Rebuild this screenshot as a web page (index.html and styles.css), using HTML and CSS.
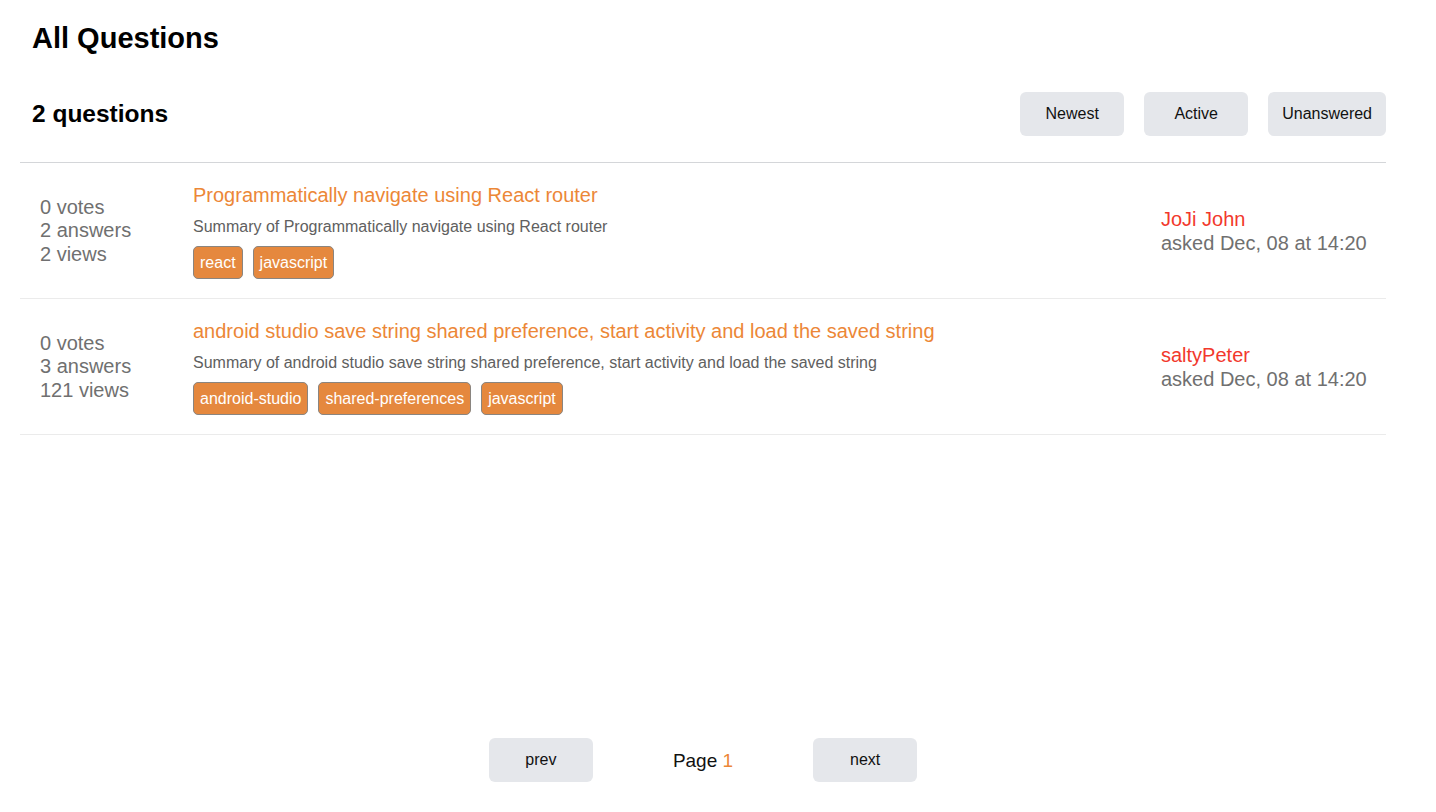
FILE: index.html
```html
<!DOCTYPE html>
<html lang="en">
<head>
<meta charset="utf-8">
<title>All Questions</title>
<link rel="stylesheet" href="styles.css">
</head>
<body>
<div class="page">
  <main class="main">
    <h1 class="page-title">All Questions</h1>
    <div class="toolbar">
      <h2 class="count">2 questions</h2>
      <div class="filters">
        <button class="btn">Newest</button>
        <button class="btn">Active</button>
        <button class="btn btn-wide">Unanswered</button>
      </div>
    </div>
    <ul class="questions">
      <li class="question">
        <div class="stats">
          <div>0 votes</div>
          <div>2 answers</div>
          <div>2 views</div>
        </div>
        <div class="body">
          <a class="q-title" href="#">Programmatically navigate using React router</a>
          <p class="summary">Summary of Programmatically navigate using React router</p>
          <div class="tags">
            <span class="tag">react</span>
            <span class="tag">javascript</span>
          </div>
        </div>
        <div class="meta">
          <div class="author">JoJi John</div>
          <div class="date">asked Dec, 08 at 14:20</div>
        </div>
      </li>
      <li class="question">
        <div class="stats">
          <div>0 votes</div>
          <div>3 answers</div>
          <div>121 views</div>
        </div>
        <div class="body">
          <a class="q-title" href="#">android studio save string shared preference, start activity and load the saved string</a>
          <p class="summary">Summary of android studio save string shared preference, start activity and load the saved string</p>
          <div class="tags">
            <span class="tag">android-studio</span>
            <span class="tag">shared-preferences</span>
            <span class="tag">javascript</span>
          </div>
        </div>
        <div class="meta">
          <div class="author">saltyPeter</div>
          <div class="date">asked Dec, 08 at 14:20</div>
        </div>
      </li>
    </ul>
  </main>
  <nav class="pager">
    <button class="btn">prev</button>
    <span class="page-label">Page <span class="page-num">1</span></span>
    <button class="btn">next</button>
  </nav>
</div>
</body>
</html>
```

FILE: styles.css
```css
* { box-sizing: border-box; }

html, body {
  margin: 0;
  padding: 0;
  background: #ffffff;
}

body {
  font-family: "Liberation Sans", Arial, Helvetica, sans-serif;
  color: #000;
}

.page {
  width: 1366px;
  margin-left: 20px;
  height: 812px;
  display: flex;
  flex-direction: column;
}

.main {
  display: flex;
  flex-direction: column;
}

.page-title {
  margin: 0;
  padding: 21px 0 0 12px;
  font-size: 29px;
  font-weight: bold;
  line-height: 34px;
}

.toolbar {
  display: flex;
  align-items: center;
  justify-content: space-between;
  padding: 37px 0 26px 12px;
  border-bottom: 1px solid #d4d6d9;
}

.count {
  margin: 0;
  font-size: 24.5px;
  font-weight: bold;
  line-height: 28px;
}

.filters {
  display: flex;
  gap: 20px;
}

.btn {
  font-family: "Liberation Sans", Arial, Helvetica, sans-serif;
  font-size: 16px;
  color: #111;
  background: #e5e7eb;
  border: none;
  border-radius: 6px;
  height: 44px;
  min-width: 104px;
  padding: 0 14px;
  cursor: pointer;
}

.questions {
  list-style: none;
  margin: 0;
  padding: 0;
}

.question {
  display: flex;
  align-items: center;
  padding: 20px 0 19px 20px;
  border-bottom: 1px solid #ebebeb;
}

.stats {
  width: 153px;
  flex-shrink: 0;
  font-size: 20px;
  line-height: 23.5px;
  color: #707070;
}

.body {
  flex: 1;
  display: flex;
  flex-direction: column;
  align-items: flex-start;
}

.q-title {
  font-size: 20px;
  line-height: 24px;
  color: #ec8737;
  text-decoration: none;
}

.summary {
  margin: 9px 0 0;
  font-size: 16px;
  line-height: 22px;
  color: #606060;
}

.tags {
  display: flex;
  gap: 10px;
  margin-top: 8px;
}

.tag {
  display: inline-flex;
  align-items: center;
  height: 33px;
  padding: 0 6px;
  font-size: 16px;
  color: #ffffff;
  background: #e5883e;
  border: 1px solid #8a8580;
  border-radius: 5px;
}

.meta {
  width: 225px;
  flex-shrink: 0;
  font-size: 20px;
  line-height: 24px;
}

.author {
  color: #f2382c;
}

.date {
  color: #707070;
}

.pager {
  margin-top: auto;
  margin-bottom: 30px;
  display: flex;
  justify-content: center;
  align-items: center;
  gap: 80px;
}

.page-label {
  font-size: 19px;
  color: #111;
  white-space: nowrap;
  padding-top: 2px;
}

.page-num {
  color: #ec8737;
}
```
